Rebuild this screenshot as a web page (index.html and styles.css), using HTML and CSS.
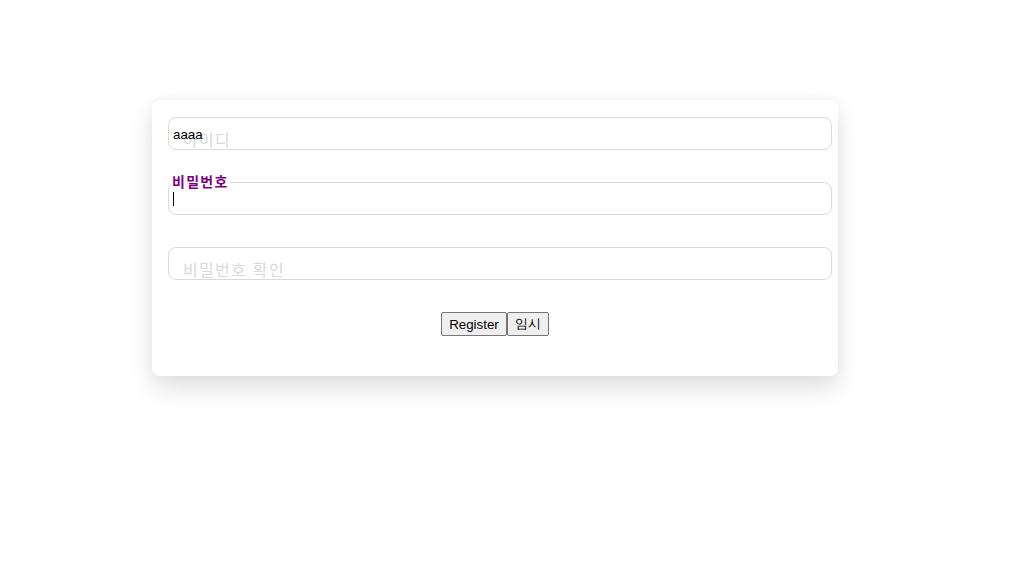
FILE: index.html
```html
<!DOCTYPE html>
<html lang="ko">
<head>
<meta charset="utf-8">
<title>Register</title>
<link rel="stylesheet" href="styles.css">
</head>
<body>
<form class="card">
  <div class="field">
    <input class="input" type="text" value="aaaa">
    <label class="label">아이디</label>
  </div>
  <div class="field">
    <input class="input" type="password">
    <label class="label active">비밀번호</label>
    <span class="caret"></span>
  </div>
  <div class="field">
    <input class="input" type="password">
    <label class="label">비밀번호 확인</label>
  </div>
  <div class="actions">
    <button type="button" class="btn">Register</button><button type="button" class="btn">임시</button>
  </div>
</form>
</body>
</html>
```
FILE: styles.css
```css
html, body {
  margin: 0;
  padding: 0;
  background: #ffffff;
}
body {
  padding-top: 100px;
  padding-left: 152px;
  min-height: 578px;
  box-sizing: border-box;
}
.card {
  width: 686px;
  box-sizing: border-box;
  padding: 17px 6px 40px 16px;
  background: #ffffff;
  border-radius: 8px;
  box-shadow: 0 12px 24px rgba(0, 0, 0, 0.12), 0 0 12px rgba(0, 0, 0, 0.04);
  display: flex;
  flex-direction: column;
  gap: 32px;
}
.field {
  position: relative;
  width: 664px;
  height: 33px;
}
.input {
  display: block;
  box-sizing: border-box;
  width: 664px;
  height: 33px;
  margin: 0;
  padding: 1px 4px 0;
  border: 1px solid #dadada;
  border-radius: 8px;
  background: transparent;
  font-family: "Liberation Sans", Arial, sans-serif;
  font-size: 13.333px;
  color: #000;
  outline: none;
  caret-color: transparent;
  position: relative;
  z-index: 2;
}
.label {
  position: absolute;
  left: 15px;
  top: 14px;
  font-family: "Noto Sans CJK KR", "Noto Sans", sans-serif;
  font-size: 16px;
  line-height: 1;
  letter-spacing: 1.3px;
  color: #d6d9dd;
  z-index: 1;
}
.label.active {
  left: 3px;
  top: -8px;
  font-size: 14px;
  font-weight: bold;
  letter-spacing: 1.3px;
  color: #800080;
  background: #ffffff;
  padding: 0 1px;
  z-index: 3;
}
.caret {
  position: absolute;
  left: 5px;
  top: 10px;
  width: 1px;
  height: 14px;
  background: #000;
  z-index: 4;
}
.actions {
  display: flex;
  justify-content: center;
  padding-right: 10px;
}
.btn {
  font-family: "Liberation Sans", Arial, sans-serif;
  font-size: 13.333px;
  height: 24px;
  margin: 0;
  padding: 1px 7px;
  border: 1px solid #767676;
  border-radius: 2px;
  background: #efefef;
  color: #000;
}
```
